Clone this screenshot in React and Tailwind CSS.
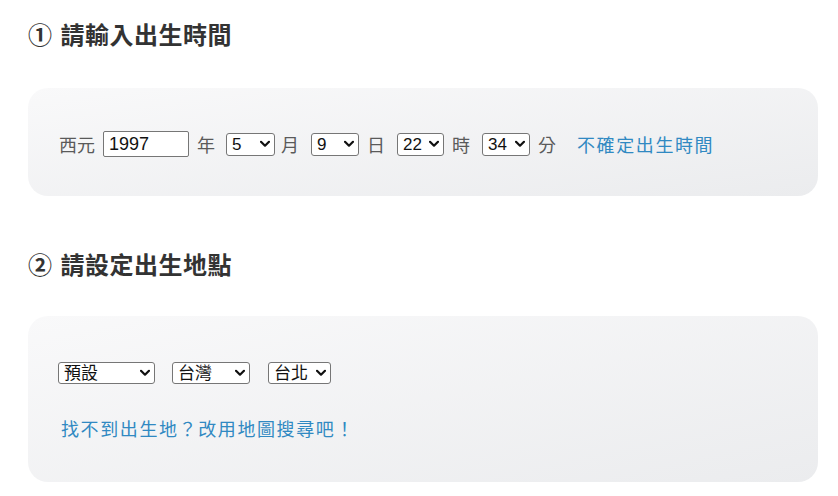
import React from "react";

const cjk = { fontFamily: '"Noto Sans CJK TC", "Noto Sans CJK SC", sans-serif' };
const mixed = { fontFamily: '"Liberation Sans", "Noto Sans CJK TC", sans-serif' };

function Chevron() {
  return (
    <svg className="pointer-events-none absolute right-[5px] top-1/2 -translate-y-1/2" width="10" height="7" viewBox="0 0 10 7">
      <path d="M1 1.2 L5 5.2 L9 1.2" fill="none" stroke="#111" strokeWidth="2.2" strokeLinecap="round" strokeLinejoin="round" />
    </svg>
  );
}

function Sel({ value, options, w, h = "h-[23px]", text = "text-[17px]" }) {
  return (
    <div className={`relative ${w} ${h} shrink-0`}>
      <select
        defaultValue={value}
        className={`appearance-none block w-full h-full border border-[#767676] rounded-[3px] bg-white pl-[5px] pr-[18px] py-0 leading-[21px] text-[#111] ${text}`}
        style={mixed}
      >
        {options.map((o) => (
          <option key={o} value={o}>{o}</option>
        ))}
      </select>
      <Chevron />
    </div>
  );
}

const range = (a, b) => Array.from({ length: b - a + 1 }, (_, i) => String(a + i));

export default function App() {
  return (
    <div className="w-[838px] h-[496px] bg-white pl-[28px] pr-[20px] pt-[10px] overflow-hidden" style={cjk}>
      <h2 className="h-[48px] flex items-center text-[24px] font-bold text-[#333] tracking-[0.5px]">
        <span className="mr-[8px]">①</span>請輸入出生時間
      </h2>
      <div className="mt-[30px] h-[108px] rounded-[20px] bg-gradient-to-br from-[#f9f9fa] to-[#ebecee] pl-[31px] pt-[43px]">
        <div className="flex items-center h-[26px] text-[18px] text-[#5a5a5a]">
          <span>西元</span>
          <input
            defaultValue="1997"
            className="ml-[8px] w-[86px] h-[26px] border border-[#767676] rounded-[2px] bg-white px-[5px] py-0 text-[18px] text-[#111]"
            style={mixed}
          />
          <span className="ml-[8px] mr-[11px]">年</span>
          <Sel value="5" options={range(1, 12)} w="w-[49px]" />
          <span className="ml-[6px] mr-[12px]">月</span>
          <Sel value="9" options={range(1, 31)} w="w-[48px]" />
          <span className="ml-[8px] mr-[12px]">日</span>
          <Sel value="22" options={range(0, 23)} w="w-[47px]" />
          <span className="ml-[8px] mr-[12px]">時</span>
          <Sel value="34" options={range(0, 59)} w="w-[48px]" />
          <span className="ml-[8px]">分</span>
          <a className="ml-[21px] text-[#3089c2] tracking-[1.6px] cursor-pointer">不確定出生時間</a>
        </div>
      </div>

      <h2 className="mt-[44px] h-[48px] flex items-center text-[24px] font-bold text-[#333] tracking-[0.5px]">
        <span className="mr-[8px]">②</span>請設定出生地點
      </h2>
      <div className="mt-[28px] h-[166px] rounded-[20px] bg-gradient-to-br from-[#f9f9fa] to-[#ebecee] pl-[30px] pt-[46px]">
        <div className="flex items-center">
          <Sel value="預設" options={["預設"]} w="w-[97px]" h="h-[22px]" />
          <div className="w-[17px]" />
          <Sel value="台灣" options={["台灣"]} w="w-[78px]" h="h-[22px]" />
          <div className="w-[18px]" />
          <Sel value="台北" options={["台北"]} w="w-[63px]" h="h-[22px]" />
        </div>
        <div className="mt-[30px] ml-[3px] h-[28px] flex items-center">
          <a className="text-[18px] text-[#3089c2] tracking-[1.6px] cursor-pointer">找不到出生地？改用地圖搜尋吧！</a>
        </div>
      </div>
    </div>
  );
}
